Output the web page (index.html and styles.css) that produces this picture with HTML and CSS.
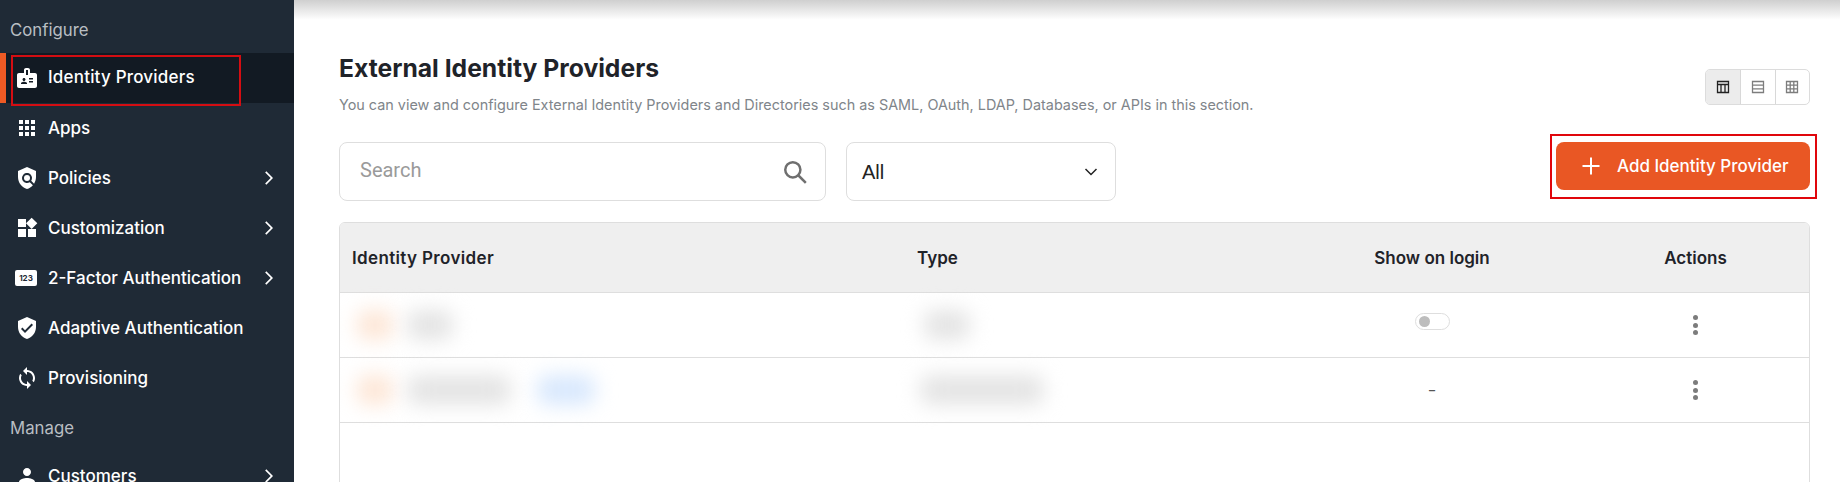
FILE: index.html
```html
<!DOCTYPE html>
<html lang="en">
<head>
<meta charset="utf-8">
<title>External Identity Providers</title>
<link rel="stylesheet" href="styles.css">
</head>
<body>
<div class="app">
  <aside class="sidebar">
    <div class="section first">Configure</div>
    <a class="item active">
      <svg class="ico" viewBox="0 0 24 24"><path d="M20 7h-5V4c0-1.1-.9-2-2-2h-2c-1.1 0-2 .9-2 2v3H4c-1.1 0-2 .9-2 2v11c0 1.1.9 2 2 2h16c1.1 0 2-.9 2-2V9c0-1.1-.9-2-2-2zM9 12c.83 0 1.5.67 1.5 1.5S9.83 15 9 15s-1.5-.67-1.5-1.5S8.17 12 9 12zm3 6H6v-.75c0-1 2-1.5 3-1.5s3 .5 3 1.5V18zm1-9h-2V4h2v5zm5 7.5h-4V15h4v1.5zm0-3h-4V12h4v1.5z"/></svg>
      <span class="label">Identity Providers</span>
    </a>
    <a class="item">
      <svg class="ico" viewBox="0 0 24 24"><path d="M4 8h4V4H4v4zm6 12h4v-4h-4v4zm-6 0h4v-4H4v4zm0-6h4v-4H4v4zm6 0h4v-4h-4v4zm6-10v4h4V4h-4zm-6 4h4V4h-4v4zm6 6h4v-4h-4v4zm0 6h4v-4h-4v4z"/></svg>
      <span class="label">Apps</span>
    </a>
    <a class="item">
      <svg class="ico" viewBox="0 0 24 24"><path d="M12 1 3 5v6c0 5.55 3.84 10.74 9 12 2.3-.56 4.33-1.9 5.88-3.71l-3.12-3.12c-1.94 1.29-4.58 1.07-6.29-.64-1.95-1.95-1.95-5.12 0-7.07 1.95-1.95 5.12-1.95 7.07 0 1.71 1.71 1.92 4.35.64 6.29l2.9 2.9C20.29 15.69 21 13.38 21 11V5l-9-4z"/><circle cx="12" cy="12" r="3"/></svg>
      <span class="label">Policies</span>
      <svg class="chev" viewBox="0 0 24 24"><path d="M8.6 5.4 10 4l8 8-8 8-1.4-1.4 6.6-6.6z"/></svg>
    </a>
    <a class="item">
      <svg class="ico" viewBox="0 0 24 24"><path d="M13 13v8h8v-8h-8zM3 21h8v-8H3v8zM3 3v8h8V3H3zm13.66-1.31L11 7.34 16.66 13l5.66-5.66-5.66-5.65z"/></svg>
      <span class="label">Customization</span>
      <svg class="chev" viewBox="0 0 24 24"><path d="M8.6 5.4 10 4l8 8-8 8-1.4-1.4 6.6-6.6z"/></svg>
    </a>
    <a class="item">
      <span class="ico-num">123</span>
      <span class="label">2-Factor Authentication</span>
      <svg class="chev" viewBox="0 0 24 24"><path d="M8.6 5.4 10 4l8 8-8 8-1.4-1.4 6.6-6.6z"/></svg>
    </a>
    <a class="item">
      <svg class="ico" viewBox="0 0 24 24"><path d="M12 1 3 5v6c0 5.55 3.84 10.74 9 12 5.16-1.26 9-6.45 9-12V5l-9-4zm-2 16-4-4 1.41-1.41L10 14.17l6.59-6.59L18 9l-8 8z"/></svg>
      <span class="label">Adaptive Authentication</span>
    </a>
    <a class="item">
      <svg class="ico" viewBox="0 0 24 24"><path d="M12 4V1L8 5l4 4V6c3.31 0 6 2.69 6 6 0 1.01-.25 1.97-.7 2.8l1.46 1.46C19.54 15.03 20 13.57 20 12c0-4.42-3.58-8-8-8zm0 14c-3.31 0-6-2.69-6-6 0-1.01.25-1.97.7-2.8L5.24 7.74C4.46 8.97 4 10.43 4 12c0 4.42 3.58 8 8 8v3l4-4-4-4v3z"/></svg>
      <span class="label">Provisioning</span>
    </a>
    <div class="section">Manage</div>
    <a class="item">
      <svg class="ico" viewBox="0 0 24 24"><path d="M12 12c2.21 0 4-1.79 4-4s-1.79-4-4-4-4 1.79-4 4 1.79 4 4 4zm0 2c-2.67 0-8 1.34-8 4v2h16v-2c0-2.66-5.33-4-8-4z"/></svg>
      <span class="label">Customers</span>
      <svg class="chev" viewBox="0 0 24 24"><path d="M8.6 5.4 10 4l8 8-8 8-1.4-1.4 6.6-6.6z"/></svg>
    </a>
  </aside>

  <main class="main">
    <div class="head">
      <div class="head-text">
        <h1 class="title">External Identity Providers</h1>
        <p class="sub">You can view and configure External Identity Providers and Directories such as SAML, OAuth, LDAP, Databases, or APIs in this section.</p>
      </div>
      <div class="views">
        <span class="view on"><svg viewBox="0 0 16 16"><path d="M2.5 2.5h11v11h-11zM2.5 5.5h11M6 5.5v8M10 5.5v8"/></svg></span>
        <span class="view"><svg viewBox="0 0 16 16"><path d="M2.5 2.5h11v11h-11zM2.5 6.2h11M2.5 9.8h11"/></svg></span>
        <span class="view"><svg viewBox="0 0 16 16"><path d="M2.5 2.5h11v11h-11zM2.5 6.2h11M2.5 9.8h11M6.2 2.5v11M9.8 2.5v11"/></svg></span>
      </div>
    </div>

    <div class="toolbar">
      <div class="search">
        <span class="placeholder">Search</span>
        <svg class="search-ico" viewBox="0 0 24 24"><circle cx="10" cy="10" r="7"/><path d="m15 15 7 7"/></svg>
      </div>
      <div class="select">
        <span>All</span>
        <svg class="select-ico" viewBox="0 0 16 16"><path d="m2.5 5 5.5 5.5L13.500 5"/></svg>
      </div>
      <button class="add">
        <svg class="plus" viewBox="0 0 20 20"><path d="M10 1.500v17M1.500 10h17"/></svg>
        <span>Add Identity Provider</span>
      </button>
    </div>

    <div class="table">
      <div class="row header">
        <div class="cell provider">Identity Provider</div>
        <div class="cell">Type</div>
        <div class="cell mid">Show on login</div>
        <div class="cell mid">Actions</div>
      </div>
      <div class="row">
        <div class="cell blobs">
          <i class="blob orange"></i><i class="blob grey short"></i>
        </div>
        <div class="cell"><i class="blob grey type-short"></i></div>
        <div class="cell mid"><span class="toggle"><i class="knob"></i></span></div>
        <div class="cell mid"><span class="dots"><i></i><i></i><i></i></span></div>
      </div>
      <div class="row">
        <div class="cell blobs">
          <i class="blob orange"></i><i class="blob grey long"></i><i class="blob blue"></i>
        </div>
        <div class="cell"><i class="blob grey type-long"></i></div>
        <div class="cell mid dash">-</div>
        <div class="cell mid"><span class="dots"><i></i><i></i><i></i></span></div>
      </div>
    </div>
  </main>
</div>
</body>
</html>
```
FILE: styles.css
```css
* { box-sizing: border-box; }
html, body { margin: 0; height: 482px; overflow: hidden; background: #fff; }
body { font-family: Inter, "Noto Sans", sans-serif; color: #1f2329; }

.app { display: flex; height: 482px; }

.sidebar { width: 294px; flex: none; background: #1f2a36; color: #fff; overflow: hidden; }
.section { height: 48px; padding: 2px 0 0 10px; display: flex; align-items: center; font-size: 16.800px; color: #b9bec3; }
.section.first { height: 53px; padding-top: 7px; }
.item { position: relative; display: flex; align-items: center; height: 50px; padding-left: 15px; font-size: 17px; font-weight: 500; color: #fff; }
.item.active { background: #121a23; border-left: 6px solid #ee5a24; padding-left: 9px; }
.item.active .label { margin-top: -2px; letter-spacing: .2px; }
.item.active::after { content: ""; position: absolute; left: 5px; top: 2px; width: 226px; height: 47px; border: 2px solid #d40d12; }
.ico { width: 24px; height: 24px; fill: #fff; flex: none; }
.ico-num { width: 22px; height: 16px; margin-right: 2px; flex: none; background: #fff; border-radius: 2px; color: #1f2a36; font-size: 8px; font-weight: 700; line-height: 16px; text-align: center; }
.label { margin-left: 9px; white-space: nowrap; }
.chev { position: absolute; left: 258px; top: 15px; width: 20px; height: 20px; fill: #fff; }

.main { flex: 1; padding: 52px 30px 0 45px; background: linear-gradient(#cfcfcf, #fff) top / 100% 20px no-repeat #fff; }

.head { display: flex; justify-content: space-between; align-items: flex-start; }
.title { margin: 0; font-size: 24.700px; line-height: 33px; font-weight: 650; color: #1f2329; }
.sub { margin: 10px 0 0; font-size: 14.400px; line-height: 20px; color: #80858a; }
.views { display: flex; margin-top: 17px; height: 36px; border: 1px solid #dcdcdc; border-radius: 5px; overflow: hidden; }
.view { width: 34.500px; display: flex; align-items: center; justify-content: center; border-left: 1px solid #d8d8d8; }
.view:first-child { border-left: 0; background: #ececec; }
.view svg { width: 16px; height: 16px; fill: none; stroke: #7d7d7d; stroke-width: 1.300; }
.view.on svg { stroke: #222; }

.toolbar { display: flex; align-items: flex-start; margin-top: 27px; }
.search { width: 487px; height: 59px; display: flex; align-items: center; justify-content: space-between; padding: 0 17px 0 20px; border: 1px solid #dedede; border-radius: 8px; }
.placeholder { font-family: Roboto, sans-serif; font-size: 20px; color: #9a9a9a; margin-top: -3px; }
.search-ico { width: 26px; height: 26px; fill: none; stroke: #6f6f6f; stroke-width: 2.300; }
.select { width: 270px; height: 59px; margin-left: 20px; display: flex; align-items: center; justify-content: space-between; padding: 0 16px 0 15px; border: 1px solid #dedede; border-radius: 8px; font-family: "Liberation Sans", sans-serif; font-size: 20px; color: #222; }
.select span { margin-top: 2px; }
.select-ico { width: 16px; height: 16px; fill: none; stroke: #222; stroke-width: 1.500; }
.add { position: relative; margin-left: auto; width: 254px; height: 48px; display: flex; align-items: center; padding: 0 0 0 25px; border: 0; border-radius: 8px; background: #e95724; color: #fff; font-family: inherit; font-size: 17px; font-weight: 500; }
.add::after { content: ""; position: absolute; inset: -8px -7px -9px -6px; border: 2px solid #e0060c; }
.plus { width: 20px; height: 20px; fill: none; stroke: #fff; stroke-width: 2; margin-right: 16px; }

.table { margin-top: 21px; height: 300px; border: 1px solid #dedede; border-radius: 6px 6px 0 0; overflow: hidden; }
.row { display: grid; grid-template-columns: 564px 380px 296px 1fr; height: 65px; border-bottom: 1px solid #dedede; }
.row.header { height: 70px; background: #efefef; font-size: 17px; font-weight: 600; color: #1f2329; }
.row.header .cell:nth-child(2) { padding-left: 13px; }
.row.header .provider { letter-spacing: .35px; }
.cell { display: flex; align-items: center; padding-left: 12px; }
.cell.mid { justify-content: center; padding-left: 0; }
.cell.mid:last-child { padding-left: 2px; }
.dash { color: #555; font-size: 20px; font-weight: 300; }

.blobs { gap: 14px; }
.blob { display: block; height: 30px; border-radius: 10px; filter: blur(10px); }
.orange { width: 36px; margin-left: 5px; background: #fde6d6; }
.grey { background: #e4e4e4; }
.short { width: 46px; }
.long { width: 104px; }
.blue { width: 58px; margin-left: 12px; background: #d8e8fd; }
.type-short { width: 46px; margin-left: 8px; }
.type-long { width: 124px; margin-left: 4px; }

.toggle { display: block; width: 35px; height: 17px; margin-top: -8px; padding: 2px 3px; border: 1px solid #dedede; border-radius: 9px; background: #fff; }
.knob { display: block; width: 11px; height: 11px; border-radius: 50%; background: #bdbdbd; }
.dots { display: flex; flex-direction: column; gap: 2.500px; }
.dots i { display: block; width: 5px; height: 5px; border-radius: 50%; background: #7c7c7c; }
```
